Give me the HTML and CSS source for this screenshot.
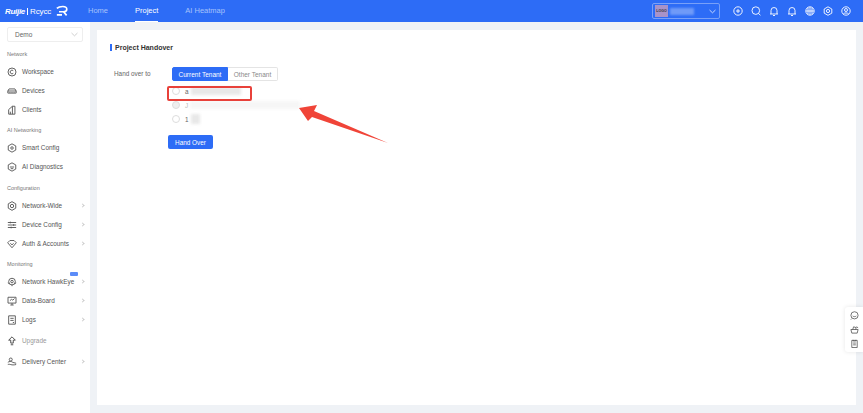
FILE: index.html
```html
<!DOCTYPE html>
<html lang="en">
<head>
    <meta charset="UTF-8">
    <meta name="viewport" content="width=device-width, initial-scale=1.0">
    <title>Project Handover</title>
    <link rel="stylesheet" href="styles.css">
</head>
<body>
<header class="topbar">
    <div class="brand">
        <span class="brand-ruijie">Ruijie</span>
        <span class="brand-sep"></span>
        <span class="brand-rcycc">Rcycc</span>
        <svg class="brand-mark" viewBox="0 0 14 13" width="12" height="12"><path d="M1 3.5C3 1.5 5 1.2 8 1.2c3 0 4.6 1.2 4.6 3.2S11 7.4 8.5 7.4H3.5M9 7.6l3.4 4M1 11h6" fill="none" stroke="#fff" stroke-width="1.9"/></svg>
    </div>
    <nav class="topnav">
        <a class="topnav-item">Home</a>
        <a class="topnav-item active">Project</a>
        <a class="topnav-item">AI Heatmap</a>
    </nav>
    <div class="topbar-right">
        <div class="tenant">
            <span class="tenant-logo">LOGO</span>
            <span class="tenant-name"></span>
            <svg viewBox="0 0 8 5" width="7" height="5"><path d="M.6.8 4 4 7.4.8" fill="none" stroke="#dce6ff" stroke-width="1"/></svg>
        </div>
        <div class="tools">
            <svg viewBox="0 0 10 10" width="10" height="10"><circle cx="5" cy="5" r="4.2"/><path d="M3 5h4M5 3v4"/></svg>
            <svg viewBox="0 0 10 10" width="10" height="10"><circle cx="4.8" cy="4.6" r="3.8"/><path d="M7.5 7.4l2 2"/></svg>
            <svg viewBox="0 0 10 10" width="10" height="10"><path d="M1 8h8M2 8V4.5a3 3 0 0 1 6 0V8M4 9.5h2"/></svg>
            <svg viewBox="0 0 10 10" width="10" height="10"><path d="M1 8h8M2 8V4.5a3 3 0 0 1 6 0V8M4 9.5h2"/></svg>
            <svg viewBox="0 0 10 10" width="10" height="10"><circle cx="5" cy="5" r="4.2"/><path d="M1 5h8M5 1v8M3 1.6v6.8M7 1.6v6.8"/></svg>
            <svg viewBox="0 0 10 10" width="10" height="10"><path d="M5 .8 8.8 3v4.2L5 9.3 1.2 7.2V3z"/><circle cx="5" cy="5" r="1.6"/></svg>
            <svg viewBox="0 0 10 10" width="10" height="10"><circle cx="5" cy="5" r="4.2"/><circle cx="5" cy="4" r="1.5"/><path d="M2.4 8c.5-1.4 4.7-1.4 5.2 0"/></svg>
        </div>
    </div>
</header>

<div class="layout">
    <aside class="sidebar">
        <div class="scope">
            <span>Demo</span>
            <svg viewBox="0 0 8 5" width="7" height="5"><path d="M.6.8 4 4 7.4.8" fill="none" stroke="#bbb" stroke-width=".8"/></svg>
        </div>

        <div class="menu-title first">Network</div>
        <a class="menu-item">
            <svg class="menu-icon" viewBox="0 0 12 12"><circle cx="6" cy="6" r="4.8"/><path d="M7.500 4.400A2.200 2.200 0 1 0 7.500 7.600"/></svg>
            <span>Workspace</span>
        </a>
        <a class="menu-item">
            <svg class="menu-icon" viewBox="0 0 12 12"><path d="M2.500 3.500h7L11 6v2.500H1V6zM1 6h10M3.500 8.500v-1M6 8.500v-1M8.500 8.500v-1"/></svg>
            <span>Devices</span>
        </a>
        <a class="menu-item">
            <svg class="menu-icon" viewBox="0 0 12 12"><path d="M2 5.500 6.500 1.500h3v9.500h-7.500zM6.500 1.500V11M4 8v3"/></svg>
            <span>Clients</span>
        </a>

        <div class="menu-title">AI Networking</div>
        <a class="menu-item">
            <svg class="menu-icon" viewBox="0 0 12 12"><path d="M6 1l4.500 2.500v5L6 11 1.500 8.500v-5z"/><circle cx="6" cy="6" r="1.500"/></svg>
            <span>Smart Config</span>
        </a>
        <a class="menu-item">
            <svg class="menu-icon" viewBox="0 0 12 12"><path d="M6 1l4.500 2.500v5L6 11 1.500 8.500v-5z"/><path d="M3.500 6h5M4.500 8h3"/></svg>
            <span>AI Diagnostics</span>
        </a>

        <div class="menu-title wide">Configuration</div>
        <a class="menu-item">
            <svg class="menu-icon" viewBox="0 0 12 12"><path d="M6 .8 10.500 3.400v5.200L6 11.200 1.500 8.600V3.400z"/><circle cx="6" cy="6" r="2"/></svg>
            <span>Network-Wide</span>
            <i class="caret"></i>
        </a>
        <a class="menu-item">
            <svg class="menu-icon" viewBox="0 0 12 12"><path d="M1 3h10M1 6h10M1 9h10M4 2v2M8 5v2M5 8v2"/></svg>
            <span>Device Config</span>
            <i class="caret"></i>
        </a>
        <a class="menu-item">
            <svg class="menu-icon" viewBox="0 0 12 12"><path d="M3.500 1.800h5L11.200 4.500 6 10.500.8 4.500z"/><path d="M4 5.200 6 7l2-1.800"/></svg>
            <span>Auth &amp; Accounts</span>
            <i class="caret"></i>
        </a>

        <div class="menu-title">Monitoring</div>
        <a class="menu-item">
            <svg class="menu-icon" viewBox="0 0 12 12"><circle cx="6" cy="5.500" r="4"/><circle cx="6" cy="5.500" r="1.500"/><path d="M1 7l2 1M11 7 9 8M6 9.500V11"/></svg>
            <span>Network HawkEye</span>
            <i class="caret"></i>
            <b class="new-badge"></b>
        </a>
        <a class="menu-item">
            <svg class="menu-icon" viewBox="0 0 12 12"><path d="M1.200 1.500h9.600v7H1.200zM4 10.800h4M6 8.500v2.300M3.500 5.500l2-1.500 1.500 1 2-2"/></svg>
            <span>Data-Board</span>
            <i class="caret"></i>
        </a>
        <a class="menu-item">
            <svg class="menu-icon" viewBox="0 0 12 12"><path d="M2 1h8v10H2zM4 4h4M4 6.500h4M7 9h1.500"/></svg>
            <span>Logs</span>
            <i class="caret"></i>
        </a>
        <a class="menu-item muted">
            <svg class="menu-icon dark" viewBox="0 0 12 12"><path d="M6 1 10 5H7.500v3.500h-3V5H2zM4.500 10.500h3"/></svg>
            <span>Upgrade</span>
        </a>
        <a class="menu-item">
            <svg class="menu-icon" viewBox="0 0 12 12"><circle cx="4.500" cy="3" r="1.800"/><path d="M1 6.500c1-1.500 5-1.500 6 0l4 1M1 9c3-1 4 1.500 10 0"/></svg>
            <span>Delivery Center</span>
            <i class="caret"></i>
        </a>
    </aside>

    <main class="main">
        <section class="card">
            <h2 class="card-title">Project Handover</h2>
            <div class="form-row">
                <label class="form-label">Hand over to</label>
                <div class="form-body">
                    <div class="tabs">
                        <button class="tab active">Current Tenant</button>
                        <button class="tab">Other Tenant</button>
                    </div>
                    <div class="radio-list">
                        <div class="radio-row"><i class="radio"></i><span>a</span><i class="smudge wide"></i></div>
                        <div class="radio-row"><i class="radio filled"></i><span class="faint">J</span><i class="smudge long"></i></div>
                        <div class="radio-row"><i class="radio"></i><span>1</span><i class="smudge small"></i></div>
                    </div>
                    <button class="submit">Hand Over</button>
                </div>
            </div>

            <div class="red-box"></div>
            <svg class="red-arrow" viewBox="0 0 90 42" width="90" height="42"><path d="M0 3 18 0 15 6 89 38 13 12 9 16z" fill="#f04438"/></svg>
        </section>
    </main>
</div>

<div class="float-tools">
    <svg viewBox="0 0 10 10" width="9" height="9"><circle cx="5" cy="4.800" r="4"/><path d="M3 5.500c1 1 3 1 4 0M2 8.500l-1 1"/></svg>
    <svg viewBox="0 0 10 10" width="9" height="9"><path d="M1 5h8l-1 4H2zM3 5l1-3 3 1-1 2M7 2l2 1"/></svg>
    <svg viewBox="0 0 10 10" width="9" height="9"><path d="M2 1.500h6v8H2zM3.500 1v1.200h3V1M3.500 4.500h3M3.500 6.500h3"/></svg>
</div>
</body>
</html>
```

FILE: styles.css
```css
* {
    box-sizing: border-box;
}

html, body {
    height: 100%;
}

body {
    margin: 0;
    font-family: "Liberation Sans", Arial, sans-serif;
    background-color: #eff2f6;
    color: #555;
    overflow: hidden;
}

/* top bar */
.topbar {
    height: 22px;
    display: flex;
    align-items: stretch;
    background-color: #2d6cf6;
    color: #fff;
}

.brand {
    width: 88px;
    display: flex;
    align-items: center;
    padding-left: 5px;
    flex-shrink: 0;
}

.brand-ruijie {
    font-size: 8px;
    font-weight: bold;
    font-style: italic;
    letter-spacing: -0.3px;
}

.brand-sep {
    width: 1px;
    height: 7px;
    background-color: #fff;
    margin: 0 2px;
}

.brand-rcycc {
    font-size: 8px;
    letter-spacing: -0.1px;
}

.brand-mark {
    margin-left: 5px;
}

.topnav {
    display: flex;
    gap: 27px;
}

.topnav-item {
    display: flex;
    align-items: center;
    font-size: 7.5px;
    color: #a6c2fb;
    border-bottom: 1px solid transparent;
}

.topnav-item.active {
    color: #fff;
    border-bottom-color: #fff;
}

.topbar-right {
    margin-left: auto;
    display: flex;
    align-items: center;
    padding-right: 12px;
}

.tenant {
    width: 68px;
    height: 16px;
    display: flex;
    align-items: center;
    border: 1px solid #79a0f8;
    border-radius: 2px;
    padding: 1px 3px 1px 2px;
    margin-right: 13px;
}

.tenant-logo {
    width: 13px;
    height: 12px;
    background-color: #a893c9;
    color: #333;
    font-size: 3.5px;
    font-weight: bold;
    line-height: 12px;
    text-align: center;
}

.tenant-name {
    width: 24px;
    height: 7px;
    margin-left: 2px;
    margin-right: auto;
    background-color: #6f9af8;
    filter: blur(1px);
}

.tools {
    display: flex;
    gap: 8px;
}

.tools svg {
    fill: none;
    stroke: #fff;
    stroke-width: 0.9;
}

/* sidebar */
.layout {
    display: flex;
    height: 391px;
}

.sidebar {
    width: 90px;
    flex-shrink: 0;
    background-color: #fff;
    padding: 5px 0 0 7px;
}

.scope {
    width: 76px;
    height: 15px;
    display: flex;
    align-items: center;
    justify-content: space-between;
    border: 1px solid #eee;
    border-radius: 2px;
    padding: 0 4px 0 7px;
    font-size: 6.5px;
    color: #666;
    margin-bottom: 8px;
}

.menu-title {
    font-size: 5.5px;
    color: #777;
    height: 8px;
    line-height: 8px;
    margin-top: 7px;
    margin-bottom: 4px;
}

.menu-title.first {
    margin-top: 0;
}

.menu-title.wide {
    margin-top: 8px;
}

.menu-item {
    position: relative;
    height: 19px;
    display: flex;
    align-items: center;
    font-size: 6.4px;
    color: #555;
}

.menu-item.muted {
    color: #999;
    height: 23px;
}

.menu-icon {
    width: 10px;
    height: 10px;
    margin-right: 5px;
    flex-shrink: 0;
    fill: none;
    stroke: #555;
    stroke-width: 1.1;
}

.menu-icon.dark {
    stroke: #444;
}

.caret {
    position: absolute;
    left: 74px;
    top: 8px;
    width: 3px;
    height: 3px;
    border-top: 1px solid #ccc;
    border-right: 1px solid #ccc;
    transform: rotate(45deg);
}

.new-badge {
    position: absolute;
    left: 63px;
    top: 0;
    width: 8px;
    height: 4px;
    background-color: #5c8cf8;
    border-radius: 1px;
}

/* content */
.main {
    flex: 1;
    padding: 8px 7px;
}

.card {
    position: relative;
    height: 100%;
    background-color: #fff;
    padding: 14px 13px;
}

.card-title {
    margin: 0 0 16px;
    height: 7px;
    line-height: 7px;
    padding-left: 3px;
    border-left: 2px solid #2d6cf6;
    font-size: 7px;
    font-weight: bold;
    color: #333;
}

.form-row {
    display: flex;
}

.form-label {
    width: 53px;
    padding: 3px 0 0 4px;
    font-size: 6.4px;
    color: #666;
}

.form-body {
    padding-left: 5px;
}

.tabs {
    display: flex;
    margin-bottom: 3px;
    padding-left: 4px;
}

.tab {
    height: 14px;
    width: 50px;
    padding: 0;
    border: 1px solid #e4e4e4;
    border-left: none;
    border-radius: 0 2px 2px 0;
    background-color: #fff;
    color: #888;
    font-family: inherit;
    font-size: 6.5px;
}

.tab.active {
    width: 56px;
    background-color: #2d6cf6;
    border: 1px solid #2d6cf6;
    border-radius: 2px 0 0 2px;
    color: #fff;
}

.radio-list {
    display: flex;
    flex-direction: column;
    margin-bottom: 9px;
}

.radio-row {
    height: 14px;
    display: flex;
    align-items: center;
    padding-left: 4px;
    font-size: 6.4px;
    color: #666;
}

.radio {
    width: 8px;
    height: 8px;
    border: 1px solid #ddd;
    border-radius: 50%;
    margin-right: 5px;
}

.radio.filled {
    background-color: #eee;
}

.faint {
    color: #bbb;
}

.smudge {
    height: 8px;
    margin-left: 2px;
    background-color: #f3f3f3;
    filter: blur(1.5px);
}

.smudge.wide {
    width: 50px;
    background-color: #e8e8e8;
}

.smudge.long {
    width: 110px;
    background-color: #f6f6f6;
}

.smudge.small {
    width: 9px;
    height: 10px;
    background-color: #e8e8e8;
}

.submit {
    display: block;
    width: 45px;
    height: 14px;
    padding: 0;
    border: none;
    border-radius: 2px;
    background-color: #2d6cf6;
    color: #fff;
    font-family: inherit;
    font-size: 6.4px;
}

/* screenshot annotations */
.red-box {
    position: absolute;
    left: 70px;
    top: 56px;
    width: 85px;
    height: 15px;
    border: 2px solid #e8413a;
    border-radius: 2px;
}

.red-arrow {
    position: absolute;
    left: 202px;
    top: 75px;
}

.float-tools {
    position: absolute;
    right: 0;
    top: 307px;
    width: 18px;
    height: 45px;
    display: flex;
    flex-direction: column;
    align-items: center;
    justify-content: space-around;
    padding: 1px 0 2px;
    background-color: #fff;
    border-radius: 3px 0 0 3px;
    box-shadow: 0 0 4px rgba(0, 0, 0, 0.1);
}

.float-tools svg {
    fill: none;
    stroke: #555;
    stroke-width: 0.9;
}
```
